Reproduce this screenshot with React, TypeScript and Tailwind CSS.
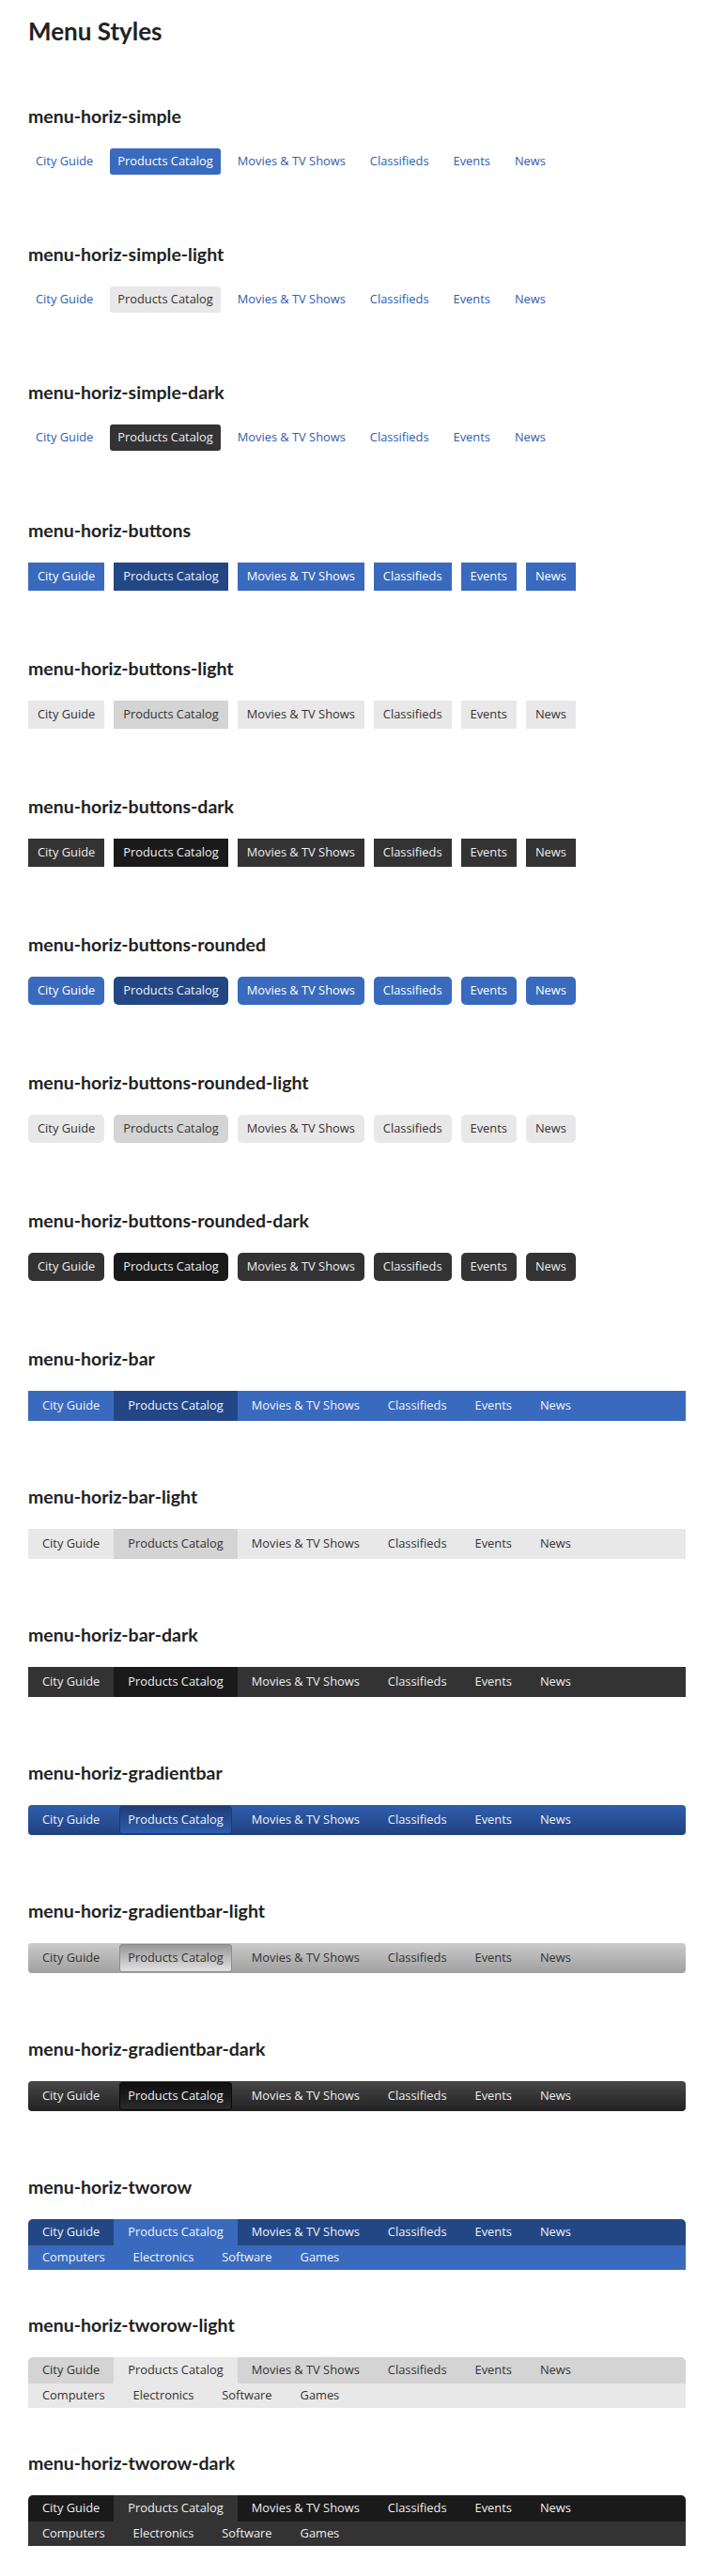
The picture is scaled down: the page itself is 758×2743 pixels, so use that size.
import React from 'react';

const items = ['City Guide', 'Products Catalog', 'Movies & TV Shows', 'Classifieds', 'Events', 'News'];
const subItems = ['Computers', 'Electronics', 'Software', 'Games'];

type Tone = { item: string; active: string };

// menu-horiz-simple*
function SimpleMenu({ active }: { active: string }) {
  return (
    <ul className="flex gap-[10px]">
      {items.map((label, i) => (
        <li
          key={label}
          className={
            'flex h-[28px] items-center rounded-[3px] px-2 ' +
            (i === 1 ? active : 'text-[#2f5db0]')
          }
        >
          {label}
        </li>
      ))}
    </ul>
  );
}

// menu-horiz-buttons*
function ButtonsMenu({ tone, rounded }: { tone: Tone; rounded?: boolean }) {
  return (
    <ul className="flex gap-[10px]">
      {items.map((label, i) => (
        <li
          key={label}
          className={
            'flex h-[30px] items-center px-[10px] ' +
            (rounded ? 'rounded-[5px] ' : '') +
            (i === 1 ? tone.active : tone.item)
          }
        >
          {label}
        </li>
      ))}
    </ul>
  );
}

// menu-horiz-bar*
function BarMenu({ bar, active }: { bar: string; active: string }) {
  return (
    <ul className={'flex h-[32px] w-[700px] ' + bar}>
      {items.map((label, i) => (
        <li key={label} className={'flex items-center px-[15px] ' + (i === 1 ? active : '')}>
          {label}
        </li>
      ))}
    </ul>
  );
}

// menu-horiz-gradientbar*
function GradientBar({ bar, active }: { bar: string; active: string }) {
  return (
    <ul className={'flex h-[32px] w-[700px] items-center rounded-[4px] ' + bar}>
      {items.map((label, i) => (
        <li
          key={label}
          className={
            'mx-[6px] flex h-[30px] items-center rounded-[3px] border px-[8px] ' +
            (i === 1 ? active : 'border-transparent')
          }
        >
          {label}
        </li>
      ))}
    </ul>
  );
}

// menu-horiz-tworow*
function TwoRow({ top, active, bottom }: { top: string; active: string; bottom: string }) {
  return (
    <div className="w-[700px]">
      <ul className={'flex h-[28px] rounded-t-[5px] ' + top}>
        {items.map((label, i) => (
          <li key={label} className={'flex items-center px-[15px] ' + (i === 1 ? active : '')}>
            {label}
          </li>
        ))}
      </ul>
      <ul className={'flex h-[26px] ' + bottom}>
        {subItems.map((label) => (
          <li key={label} className="flex items-center px-[15px]">
            {label}
          </li>
        ))}
      </ul>
    </div>
  );
}

const blue: Tone = { item: 'bg-[#3a6abd] text-white', active: 'bg-[#234785] text-[#eef2fa]' };
const light: Tone = { item: 'bg-[#e8e8e8] text-[#333]', active: 'bg-[#d4d4d4] text-[#333]' };
const dark: Tone = { item: 'bg-[#333] text-[#eee]', active: 'bg-[#1a1a1a] text-[#eee]' };

const sections: { name: string; menu: React.ReactNode }[] = [
  { name: 'menu-horiz-simple', menu: <SimpleMenu active="bg-[#3a6abd] text-white" /> },
  { name: 'menu-horiz-simple-light', menu: <SimpleMenu active="bg-[#e8e8e8] text-[#333]" /> },
  { name: 'menu-horiz-simple-dark', menu: <SimpleMenu active="bg-[#333] text-[#eee]" /> },
  { name: 'menu-horiz-buttons', menu: <ButtonsMenu tone={blue} /> },
  { name: 'menu-horiz-buttons-light', menu: <ButtonsMenu tone={light} /> },
  { name: 'menu-horiz-buttons-dark', menu: <ButtonsMenu tone={dark} /> },
  { name: 'menu-horiz-buttons-rounded', menu: <ButtonsMenu tone={blue} rounded /> },
  { name: 'menu-horiz-buttons-rounded-light', menu: <ButtonsMenu tone={light} rounded /> },
  { name: 'menu-horiz-buttons-rounded-dark', menu: <ButtonsMenu tone={dark} rounded /> },
  { name: 'menu-horiz-bar', menu: <BarMenu bar="bg-[#3a6abd] text-[#f0f4fb]" active="bg-[#234785]" /> },
  { name: 'menu-horiz-bar-light', menu: <BarMenu bar="bg-[#e8e8e8] text-[#333]" active="bg-[#d4d4d4]" /> },
  { name: 'menu-horiz-bar-dark', menu: <BarMenu bar="bg-[#333] text-[#eee]" active="bg-[#1a1a1a]" /> },
  {
    name: 'menu-horiz-gradientbar',
    menu: (
      <GradientBar
        bar="bg-gradient-to-b from-[#2f5eae] to-[#21417e] text-[#eef2fa]"
        active="border-[#1e3a72] bg-gradient-to-b from-[#213d78] to-[#2f5dac]"
      />
    ),
  },
  {
    name: 'menu-horiz-gradientbar-light',
    menu: (
      <GradientBar
        bar="bg-gradient-to-b from-[#cbcbcb] to-[#a0a0a0] text-[#333]"
        active="border-[#8c8c8c] bg-gradient-to-b from-[#989898] to-[#e2e2e2]"
      />
    ),
  },
  {
    name: 'menu-horiz-gradientbar-dark',
    menu: (
      <GradientBar
        bar="bg-gradient-to-b from-[#484848] to-[#222] text-[#eee]"
        active="border-[#0a0a0a] bg-gradient-to-b from-[#0f0f0f] to-[#2a2a2a]"
      />
    ),
  },
  {
    name: 'menu-horiz-tworow',
    menu: <TwoRow top="bg-[#234785] text-[#eef2fa]" active="bg-[#3a6abd]" bottom="bg-[#3a6abd] text-[#eef2fa]" />,
  },
  {
    name: 'menu-horiz-tworow-light',
    menu: <TwoRow top="bg-[#d4d4d4] text-[#333]" active="bg-[#e8e8e8]" bottom="bg-[#e8e8e8] text-[#333]" />,
  },
  {
    name: 'menu-horiz-tworow-dark',
    menu: <TwoRow top="bg-[#1a1a1a] text-[#eee]" active="bg-[#333]" bottom="bg-[#333] text-[#eee]" />,
  },
];

export default function App() {
  return (
    <div className="min-h-screen bg-white pb-[32px] pl-[30px] pt-[17px] font-['Open_Sans',sans-serif] text-[12.85px] text-[#333]">
      <h1 className="mb-[64px] font-['Lato',sans-serif] text-[26px] font-bold leading-[32px] text-[#222]">
        Menu Styles
      </h1>

      {sections.map((s, i) => (
        <section key={s.name} className={i < sections.length - 1 ? 'mb-[48px]' : ''}>
          <h3 className="mb-[23px] font-['Lato',sans-serif] text-[19.5px] font-bold leading-[22px] text-[#222]">
            {s.name}
          </h3>
          <div className="h-[54px]">{s.menu}</div>
        </section>
      ))}
    </div>
  );
}
